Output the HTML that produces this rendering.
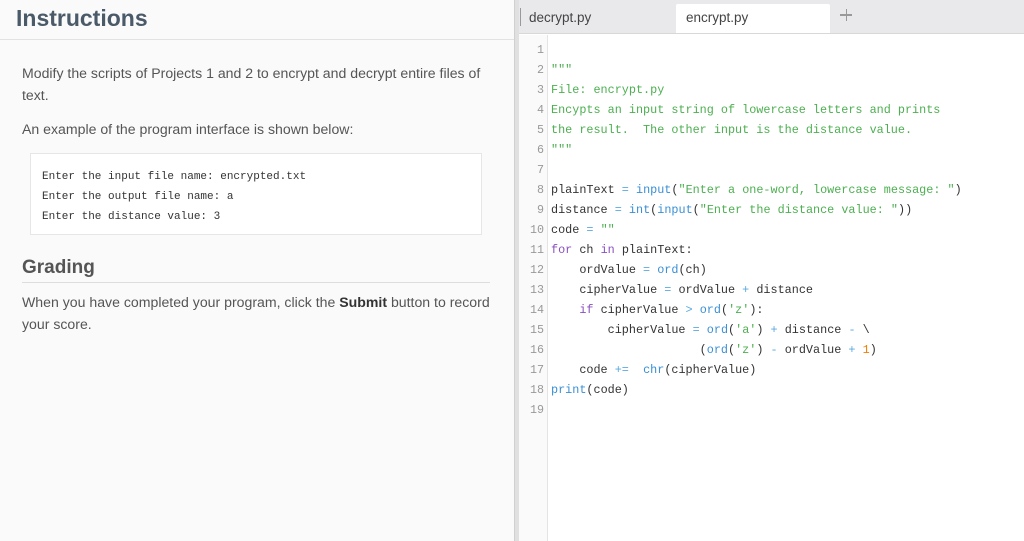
<!DOCTYPE html>
<html><head><style>
*{margin:0;padding:0;box-sizing:border-box}
body{width:1024px;height:541px;overflow:hidden;background:#fafafa;font-family:"Liberation Sans",sans-serif;position:relative}
.abs{position:absolute;white-space:pre}
#left{position:absolute;left:0;top:0;width:514px;height:541px;background:#fafafa}
h1{position:absolute;left:16px;top:5px;font-size:23px;font-weight:bold;color:#4b5a69}
.p{position:absolute;left:22px;font-size:14.1px;color:#555}
.box{position:absolute;left:30px;top:153px;width:452px;height:82px;background:#fff;border:1px solid #e6e6e6}
.mono{font-family:"Liberation Mono",monospace}
#div{position:absolute;left:514px;top:0;width:5px;height:541px;background:#e0e0e0;border-left:1px solid #d0d0d0}
#right{position:absolute;left:519px;top:0;width:505px;height:541px;background:#fff}
#tabs{position:absolute;left:0;top:0;width:505px;height:34px;background:#e9e9eb;border-bottom:1px solid #d8d8d8}
.tab{position:absolute;top:4px;height:29px;font-size:13.5px;color:#444;padding:6px 10px}
#gut{position:absolute;left:0;top:35px;width:29px;height:506px;background:#fafafa;border-right:1px solid #e4e4e4}
.ln{position:absolute;width:25px;text-align:right;font-family:"Liberation Mono",monospace;font-size:11.7px;color:#999}
.cl{position:absolute;left:32px;font-family:"Liberation Mono",monospace;font-size:11.8px;color:#333;white-space:pre}
.g{color:#4caf50}.b{color:#3a8fd6}.k{color:#8a4fc1}.o{color:#f57c00}.op{color:#5aa9e0}
</style></head><body>
<div id="left">
<h1>Instructions</h1>
<div style="position:absolute;left:0;top:39px;width:514px;height:1px;background:#e2e2e2"></div>
<div class="p abs" style="top:65px">Modify the scripts of Projects 1 and 2 to encrypt and decrypt entire files of</div>
<div class="p abs" style="top:87px">text.</div>
<div class="p abs" style="top:121px">An example of the program interface is shown below:</div>
<div class="box"></div>
<div class="abs mono" style="left:42px;top:167px;font-size:11px;color:#333;line-height:20px">Enter the input file name: encrypted.txt
Enter the output file name: a
Enter the distance value: 3</div>
<div class="abs" style="left:22px;top:257px;font-size:19px;font-weight:bold;color:#555">Grading</div>
<div style="position:absolute;left:22px;top:282px;width:468px;height:1px;background:#ddd"></div>
<div class="p abs" style="top:294px">When you have completed your program, click the <b style="color:#333">Submit</b> button to record</div>
<div class="p abs" style="top:316px">your score.</div>
</div>
<div id="div"></div>
<div id="right">
<div id="tabs">
<div style="position:absolute;left:1px;top:8px;width:1px;height:18px;background:#999"></div>
<div class="tab" style="left:0;width:153px">decrypt.py</div>
<div class="tab" style="left:157px;width:154px;background:#fff;border-radius:2px 2px 0 0">encrypt.py</div>
<div style="position:absolute;left:321px;top:14px;width:12px;height:1.5px;background:#999"></div>
<div style="position:absolute;left:326.5px;top:8.5px;width:1.5px;height:12px;background:#999"></div>
</div>
<div id="gut"></div>
<div class="ln" style="top:43px">1</div><div class="ln" style="top:63px">2</div><div class="ln" style="top:83px">3</div><div class="ln" style="top:103px">4</div><div class="ln" style="top:123px">5</div><div class="ln" style="top:143px">6</div><div class="ln" style="top:163px">7</div><div class="ln" style="top:183px">8</div><div class="ln" style="top:203px">9</div><div class="ln" style="top:223px">10</div><div class="ln" style="top:243px">11</div><div class="ln" style="top:263px">12</div><div class="ln" style="top:283px">13</div><div class="ln" style="top:303px">14</div><div class="ln" style="top:323px">15</div><div class="ln" style="top:343px">16</div><div class="ln" style="top:363px">17</div><div class="ln" style="top:383px">18</div><div class="ln" style="top:403px">19</div>
<div class="cl g" style="top:63px">"""</div>
<div class="cl g" style="top:83px">File: encrypt.py</div>
<div class="cl g" style="top:103px">Encypts an input string of lowercase letters and prints</div>
<div class="cl g" style="top:123px">the result.  The other input is the distance value.</div>
<div class="cl g" style="top:143px">"""</div>
<div class="cl" style="top:183px">plainText <span class="op">=</span> <span class="b">input</span>(<span class="g">"Enter a one-word, lowercase message: "</span>)</div>
<div class="cl" style="top:203px">distance <span class="op">=</span> <span class="b">int</span>(<span class="b">input</span>(<span class="g">"Enter the distance value: "</span>))</div>
<div class="cl" style="top:223px">code <span class="op">=</span> <span class="g">""</span></div>
<div class="cl" style="top:243px"><span class="k">for</span> ch <span class="k">in</span> plainText:</div>
<div class="cl" style="top:263px">    ordValue <span class="op">=</span> <span class="b">ord</span>(ch)</div>
<div class="cl" style="top:283px">    cipherValue <span class="op">=</span> ordValue <span class="op">+</span> distance</div>
<div class="cl" style="top:303px">    <span class="k">if</span> cipherValue <span class="op">&gt;</span> <span class="b">ord</span>(<span class="g">'z'</span>):</div>
<div class="cl" style="top:323px">        cipherValue <span class="op">=</span> <span class="b">ord</span>(<span class="g">'a'</span>) <span class="op">+</span> distance <span class="op">-</span> \</div>
<div class="cl" style="top:343px">                     (<span class="b">ord</span>(<span class="g">'z'</span>) <span class="op">-</span> ordValue <span class="op">+</span> <span class="o">1</span>)</div>
<div class="cl" style="top:363px">    code <span class="op">+=</span>  <span class="b">chr</span>(cipherValue)</div>
<div class="cl" style="top:383px"><span class="b">print</span>(code)</div>
</div>
</body></html>
